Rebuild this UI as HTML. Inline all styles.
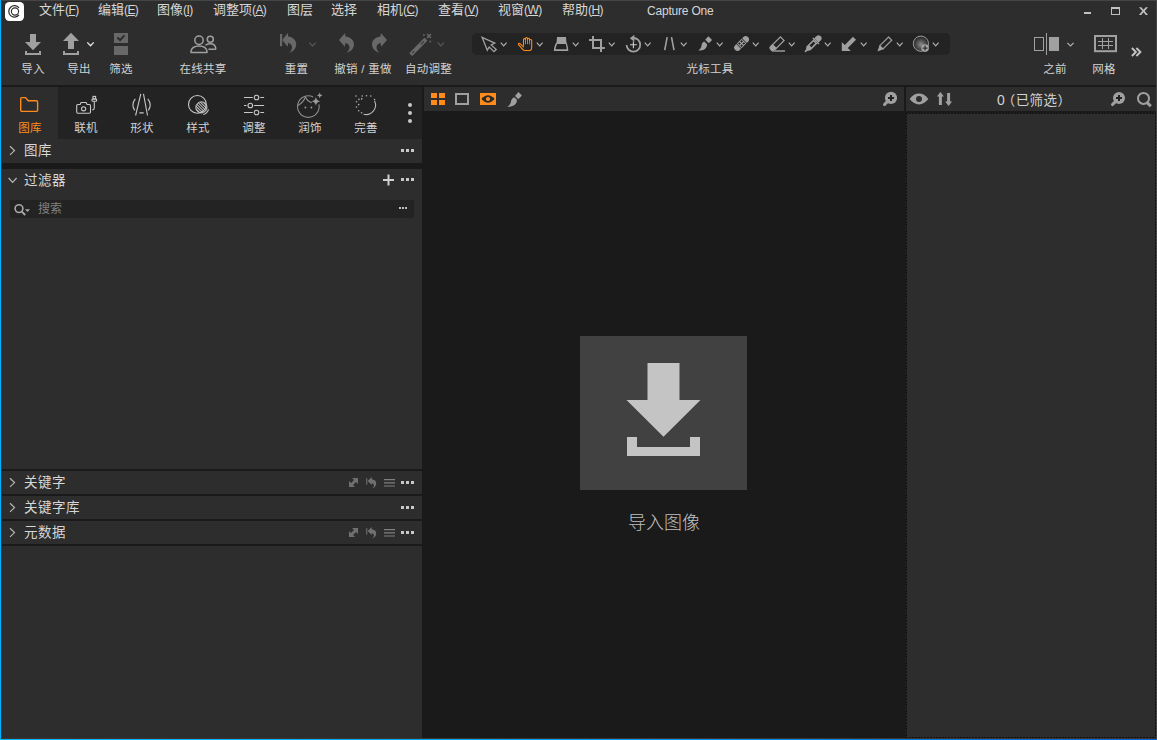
<!DOCTYPE html>
<html lang="zh-CN">
<head>
<meta charset="utf-8">
<title>Capture One</title>
<style>
*{box-sizing:border-box;margin:0;padding:0}
html,body{width:1157px;height:740px;overflow:hidden;background:#2d2d2d}
body{position:relative;font-family:"Liberation Sans","Noto Sans CJK SC",sans-serif;font-size:12px;color:#d2d2d2;-webkit-font-smoothing:antialiased}
.abs,.abs>*{position:absolute}
.t{position:absolute;white-space:nowrap;line-height:16px;height:16px}
.c{transform:translateX(-50%)}
.box{position:absolute}
svg{position:absolute;overflow:visible}
.m{position:absolute;top:1px;font-size:13px;line-height:18px;white-space:nowrap;color:#d6d6d6}
.m i{font-style:normal;font-size:12px;letter-spacing:-0.6px}
.m u{text-decoration:underline;text-underline-offset:1px}
.lbl{position:absolute;top:61px;font-size:11.500px;letter-spacing:.300px;line-height:16px;white-space:nowrap;color:#d2d2d2;transform:translateX(-50%)}
.tab{position:absolute;top:120px;font-size:11.500px;letter-spacing:.300px;line-height:16px;white-space:nowrap;color:#d2d2d2;transform:translateX(-50%)}
.ph{position:absolute;left:24px;font-size:13.500px;letter-spacing:.500px;line-height:20px;white-space:nowrap;color:#d6d6d6}
</style>
</head>
<body>
<!-- ===== window frame ===== -->
<div class="box" id="frame-top" style="left:0;top:0;width:1157px;height:1px;background:#454545"></div>

<!-- ===== menu bar ===== -->
<div id="menubar">
<svg id="logo" style="left:5px;top:2px" width="19" height="19" viewBox="0 0 19 19"><rect x="0" y="0" width="19" height="19" rx="4.200" fill="#fff"/><path d="M14 5.900A5.700 5.700 0 1 0 14 12.900" fill="none" stroke="#2a2a2a" stroke-width="1.200"/><circle cx="10" cy="9.500" r="3.600" fill="none" stroke="#2a2a2a" stroke-width="1.100"/></svg>
<div class="m" style="left:39px">文件<i>(<u>F</u>)</i></div>
<div class="m" style="left:98px">编辑<i>(<u>E</u>)</i></div>
<div class="m" style="left:157px">图像<i>(<u>I</u>)</i></div>
<div class="m" style="left:213px">调整项<i>(<u>A</u>)</i></div>
<div class="m" style="left:287px">图层</div>
<div class="m" style="left:331px">选择</div>
<div class="m" style="left:377px">相机<i>(<u>C</u>)</i></div>
<div class="m" style="left:438px">查看<i>(<u>V</u>)</i></div>
<div class="m" style="left:498px">视窗<i>(<u>W</u>)</i></div>
<div class="m" style="left:562px">帮助<i>(<u>H</u>)</i></div>
<div class="m" style="left:647px;top:2px;font-size:12px;letter-spacing:-0.2px">Capture One</div>
</div>

<!-- ===== toolbar ===== -->
<div id="toolbar">
<div class="lbl" style="left:33px">导入</div>
<div class="lbl" style="left:79px">导出</div>
<div class="lbl" style="left:121px">筛选</div>
<div class="lbl" style="left:203px">在线共享</div>
<div class="lbl" style="left:296.500px">重置</div>
<div class="lbl" style="left:363px">撤销 / 重做</div>
<div class="lbl" style="left:428.500px">自动调整</div>
<div class="box" id="cursorgroup" style="left:472px;top:33px;width:478px;height:22px;border-radius:5px;background:#232323"></div>
<div class="lbl" style="left:710px">光标工具</div>
<div class="lbl" style="left:1055px">之前</div>
<div class="lbl" style="left:1104px">网格</div>
</div>

<!-- ===== separators / main areas ===== -->
<div class="box" style="left:2px;top:85px;width:1155px;height:2px;background:#1a1a1a"></div>


<!-- tool tab strip -->
<div class="box" id="tabstrip" style="left:2px;top:87px;width:420px;height:52px;background:#232323"></div>
<div class="box" id="tabsel" style="left:2px;top:87px;width:56px;height:52px;background:#2d2d2d"></div>
<div class="tab" style="left:30px;color:#ff8c1a">图库</div>
<div class="tab" style="left:86px">联机</div>
<div class="tab" style="left:142px">形状</div>
<div class="tab" style="left:198px">样式</div>
<div class="tab" style="left:254px">调整</div>
<div class="tab" style="left:310px">润饰</div>
<div class="tab" style="left:366px">完善</div>

<!-- left panel -->
<div class="box" style="left:2px;top:163px;width:420px;height:6px;background:#1a1a1a"></div>
<div class="box" style="left:2px;top:469px;width:420px;height:2px;background:#1a1a1a"></div>
<div class="box" style="left:2px;top:494px;width:420px;height:2px;background:#1a1a1a"></div>
<div class="box" style="left:2px;top:519px;width:420px;height:2px;background:#1a1a1a"></div>
<div class="box" style="left:2px;top:544px;width:420px;height:2px;background:#1a1a1a"></div>
<div class="ph" style="top:141px">图库</div>
<div class="ph" style="top:171px">过滤器</div>
<div class="ph" style="top:473px">关键字</div>
<div class="ph" style="top:498px">关键字库</div>
<div class="ph" style="top:523px">元数据</div>
<div class="box" id="search" style="left:10px;top:200px;width:404px;height:18px;background:#232323"></div>
<div class="t" style="left:38px;top:201px;color:#808080">搜索</div>

<!-- splitter + viewer -->
<div class="box" style="left:422px;top:87px;width:2px;height:652px;background:#1a1a1a"></div>
<div class="box" id="viewer" style="left:424px;top:111px;width:482px;height:628px;background:#1a1a1a"></div>
<div class="box" id="importtile" style="left:580px;top:336px;width:167px;height:154px;background:#414141"></div>
<div class="t c" style="left:664px;top:511px;font-size:18px;line-height:24px;height:24px;color:#c0c0c0;font-weight:300">导入图像</div>

<!-- browser -->
<div class="box" style="left:904px;top:87px;width:2px;height:24px;background:#1a1a1a"></div>
<div class="t" style="left:997px;top:91px;font-size:14px;line-height:18px;color:#d2d2d2">0<span style="margin-left:-3px;font-size:13.500px;letter-spacing:.400px">（已筛选）</span></div>
<div class="box" style="left:906px;top:111px;width:250px;height:2px;background:#1a1a1a"></div>
<div class="box" id="browser" style="left:906px;top:113px;width:250px;height:625px;background:#2d2d2d"></div>
<div class="box" style="left:906px;top:113px;width:250px;height:1px;background:repeating-linear-gradient(90deg,#121212 0,#121212 2px,transparent 2px,transparent 3px)"></div>
<div class="box" style="left:906px;top:737px;width:250px;height:1px;background:repeating-linear-gradient(90deg,#121212 0,#121212 2px,transparent 2px,transparent 3px)"></div>
<div class="box" style="left:906px;top:113px;width:1px;height:625px;background:repeating-linear-gradient(180deg,#121212 0,#121212 2px,transparent 2px,transparent 3px)"></div>
<div class="box" style="left:1155px;top:113px;width:1px;height:625px;background:repeating-linear-gradient(180deg,#121212 0,#121212 2px,transparent 2px,transparent 3px)"></div>

<!-- ===== icons overlay (page coordinates) ===== -->
<svg id="icons" style="left:0;top:0" width="1157" height="740" viewBox="0 0 1157 740" fill="none">
<!-- window controls -->
<g fill="#c0c0c0">
<rect x="1084" y="12" width="7" height="2"/>
<path d="M1111 7h9v8h-9zM1112 9v5h7v-5z" fill-rule="evenodd"/>
<path d="M1139 7.2h2.3l2.2 2.6 2.2-2.6h2.3l-3.3 3.8 3.4 4h-2.3l-2.3-2.8-2.3 2.8h-2.3l3.4-4z"/>
</g>
<!-- import -->
<g fill="#a0a0a0">
<path d="M30 34h6v8h5l-8 8.2-8-8.2h5z"/>
<path d="M25 51h2v2h12v-2h2v4h-16z"/>
<!-- export -->
<path d="M71 32.8l8 8.2h-5v8h-6v-8h-5z"/>
<path d="M63 51h2v2h12v-2h2v4h-16z"/>
</g>
<path d="M87.3 42.4l3.2 3.4 3.2-3.4" stroke="#e8e8e8" stroke-width="1.3"/>
<!-- cull -->
<g fill="#686868">
<rect x="114" y="33" width="14" height="10"/>
<rect x="114" y="46" width="14" height="9"/>
</g>
<path d="M117.300 37.600l2.800 2.400 4.400-4.600" stroke="#2d2d2d" stroke-width="2"/>
<!-- share -->
<g stroke="#a0a0a0" stroke-width="1.500" stroke-linejoin="round" stroke-linecap="round">
<circle cx="199" cy="40.200" r="4.200"/>
<path d="M191.600 52.500c-.600 0-.800-.400-.700-1 .600-3.700 3.900-5.600 8.100-5.600s7.500 1.900 8.100 5.600c.100.600-.100 1-.700 1z"/>
<circle cx="210.300" cy="39.200" r="3"/>
<path d="M206 44.900c1.200-.700 2.700-1.100 4.300-1.100 3 0 5.100 1.600 5.500 4.600.100.600-.200.900-.700.900h-6.200"/>
</g>
<!-- reset -->
<g fill="#686868">
<rect x="280" y="34" width="2.200" height="12.200"/>
<path d="M282.200 39.900L287.900 32.900L288.200 36.400C292.500 36.800 296.200 39.800 296.200 44.200C296.200 48.400 293.200 51.500 289.200 52.900C291.200 51 292 49.300 292 47.600C292 45.200 290.400 43.400 288.200 43.100L287.600 46.800Z"/>
<!-- undo -->
<path transform="translate(339 0) scale(1.070 1) translate(-282.200 0)" d="M282.200 39.900L287.900 32.900L288.200 36.400C292.500 36.800 296.200 39.800 296.200 44.200C296.200 48.400 293.200 51.500 289.200 52.900C291.200 51 292 49.300 292 47.600C292 45.200 290.400 43.400 288.200 43.100L287.600 46.800Z"/>
<!-- redo -->
<path transform="translate(387 0) scale(-1.070 1) translate(-282.200 0)" d="M282.200 39.900L287.900 32.900L288.200 36.400C292.500 36.800 296.200 39.800 296.200 44.200C296.200 48.400 293.200 51.500 289.200 52.900C291.200 51 292 49.300 292 47.600C292 45.200 290.400 43.400 288.200 43.100L287.600 46.800Z"/>
</g>
<path d="M309.300 42.600l3.200 3.300 3.200-3.300" stroke="#585858" stroke-width="1.200"/>
<!-- auto adjust wand -->
<g transform="translate(418.350 46.900) rotate(-45)">
<rect x="-10.900" y="-2.100" width="21.800" height="4.200" rx=".900" fill="#686868"/>
<rect x="3.700" y="-.500" width="4.300" height="1" fill="#2d2d2d"/>
<rect x="-8.600" y="-.500" width="2.400" height="1" fill="#2d2d2d"/>
</g>
<path d="M427.100 34.100l3.800 3.800M430.900 34.100l-3.800 3.800" stroke="#686868" stroke-width="1.400"/>
<rect x="423.100" y="34.200" width="1.600" height="1.600" fill="#686868"/>
<rect x="429.400" y="40.700" width="1.700" height="1.700" fill="#606060"/>
<path d="M437.600 42.400l3.200 3.400 3.200-3.400" stroke="#585858" stroke-width="1.200"/>

<!-- ===== cursor tools ===== -->
<g stroke="#b0b0b0" stroke-width="1.200"><path d="M500.8 42.7l2.9 3.1 2.900-3.100"/><path d="M536.8 42.7l2.9 3.1 2.900-3.100"/><path d="M572.8 42.7l2.9 3.1 2.900-3.100"/><path d="M608.8 42.7l2.9 3.1 2.900-3.100"/><path d="M644.8 42.7l2.9 3.1 2.900-3.100"/><path d="M680.8 42.7l2.9 3.1 2.900-3.100"/><path d="M716.8 42.7l2.9 3.1 2.900-3.100"/><path d="M752.8 42.7l2.9 3.1 2.900-3.100"/><path d="M788.8 42.7l2.9 3.1 2.900-3.100"/><path d="M824.8 42.7l2.9 3.1 2.900-3.100"/><path d="M860.8 42.7l2.9 3.1 2.900-3.100"/><path d="M896.8 42.7l2.9 3.1 2.900-3.100"/><path d="M932.8 42.7l2.9 3.1 2.900-3.100"/></g>
<!-- pointer -->
<path d="M482.100 37.300L494.800 43.100l-3.600 1.900 5 4.600-2.200 2-4.800-4.600-1.900 3.200z" stroke="#a0a0a0" stroke-width="1.300" stroke-linejoin="miter"/>
<!-- hand -->
<g stroke="#ff8c1a" stroke-linecap="round" stroke-linejoin="round">
<path d="M525.500 43.800V39M527.500 43.800V38.300M529.500 44V39" stroke-width=".800"/>
<path d="M523.500 45.200V39.600a1 1 0 0 1 2 0M525.500 38.600a1 1 0 0 1 2 0M527.500 39.200a1 1 0 0 1 2 0M529.500 40.600a1.100 1.100 0 0 1 2.200 0V47.400c0 2-1.200 3.100-3 3.100H525c-1.300 0-2.200-.700-3-1.900L518.500 44.700c-.600-.900.600-1.900 1.500-1.100L523.500 46.800" stroke-width="1.100"/>
</g>
<!-- keystone -->
<path d="M557 37H566L566.400 42.300C567.600 45 568.200 48 568.300 51H553.900C554 48 554.600 45 556.600 42.300Z" fill="#a0a0a0"/>
<path d="M557.200 43.900H565.800C566.300 45.600 566.600 47.500 566.700 49.200H555.500C555.700 47.500 556.200 45.600 557.200 43.900Z" fill="#232323"/>
<!-- crop -->
<path d="M593 36V48H604.800M589 40H601V52" stroke="#a0a0a0" stroke-width="2"/>
<!-- rotate -->
<path d="M633.400 38a6.800 6.800 0 1 1-6.800 7" stroke="#a0a0a0" stroke-width="1.800"/>
<path d="M629.800 38.300l4.600-3.500v7z" fill="#a0a0a0"/>
<path d="M630 44.800h6.800M633.400 41.400v6.800" stroke="#d0d0d0" stroke-width="1.100"/>
<!-- lines -->
<path d="M667.200 37.100l-2.500 13M671.500 37.100l2.500 13" stroke="#a0a0a0" stroke-width="1.600"/>
<!-- brush -->
<g fill="#a0a0a0">
<path d="M708.400 36.200l3.700 3.700-3.300 3.300-3.600-3.400z"/>
<path d="M704.300 41.600l2.800 2.700c0 4.300-3.600 6.800-8.800 5.900 2.500-1.200 3-3.200 3.200-4.700.200-1.900 1.300-3.400 2.800-3.900z"/>
</g>
<!-- bandage -->
<g transform="translate(741.600 43.500) rotate(-45)">
<path d="M-9.100 0a3.300 3.300 0 0 1 3.300-3.300h1.700v6.600h-1.700a3.300 3.300 0 0 1-3.300-3.300zM9.100 0a3.300 3.300 0 0 0-3.300-3.300h-1.700v6.600h1.700a3.300 3.300 0 0 0 3.300-3.300z" fill="#a0a0a0"/>
<rect x="-3.400" y="-3.300" width="6.800" height="6.600" fill="#a0a0a0"/>
<path d="M-2.500 -2.500h1.900v1.900h-1.900zM.6 -2.500h1.900v1.900h-1.900zM-2.500 .6h1.900v1.900h-1.900zM.6 .6h1.900v1.900h-1.900z" fill="#232323"/>
</g>
<!-- eraser -->
<g transform="translate(776.800 44.100) rotate(-45)">
<rect x="-3.400" y="-2.600" width="11.100" height="5.200" stroke="#a0a0a0" stroke-width="1.200"/>
<path d="M-3.400 -3.200v6.400h-3a2.200 2.200 0 0 1-2.200-2.200v-2a2.200 2.200 0 0 1 2.200-2.200z" fill="#a0a0a0"/>
</g>
<rect x="774" y="50" width="11" height="2" fill="#7c7c7c"/>
<!-- eyedropper -->
<g transform="translate(812.850 44) rotate(-45)" fill="#a0a0a0">
<path d="M5 -3h3a3 3 0 0 1 0 6h-3z"/>
<rect x="3.600" y="-4.300" width="1.400" height="8.600"/>
<path d="M3.600 -2.800h-9.600l-3 1.900v1.800l3 1.900h9.600z"/>
<rect x="-11" y="-.900" width="2.200" height="1.800"/>
<rect x="-3.400" y="-1.300" width="5.600" height="2.600" fill="#232323"/>
</g>
<!-- arrow -->
<path d="M841.800 51V42l3 3 8.200-8.200 3 3-8.200 8.200 3 3z" fill="#a0a0a0"/>
<!-- pen -->
<path d="M888.500 37l3.200 3.200-8.700 8.700-3.200-3.200z" stroke="#a0a0a0" stroke-width="1.200"/>
<path d="M879.500 45.400l3.800 3.800-5.900 2.200z" fill="#a0a0a0"/>
<!-- gradient circle -->
<defs><radialGradient id="rg" cx="0.500" cy="0.550" r="0.500"><stop offset="0" stop-color="#8c8c8c"/><stop offset="0.450" stop-color="#5c5c5c"/><stop offset="1" stop-color="#262626"/></radialGradient></defs>
<circle cx="920.900" cy="43.700" r="7.600" fill="url(#rg)" stroke="#a0a0a0" stroke-width="1"/>
<circle cx="925.100" cy="48.100" r="3.800" fill="#a8a8a8"/>
<path d="M922.600 48.100h5M925.100 45.600v5" stroke="#333" stroke-width="1.300"/>
<!-- ===== before / grid / more ===== -->
<rect x="1034.500" y="37.500" width="9" height="13" stroke="#a0a0a0" stroke-width="1"/>
<rect x="1046" y="33" width="1" height="22" fill="#a0a0a0"/>
<rect x="1049" y="37" width="10" height="14" fill="#a0a0a0"/>
<path d="M1067.400 42.800l3.100 3.200 3.100-3.200" stroke="#b0b0b0" stroke-width="1.200"/>
<rect x="1095" y="36" width="21" height="15.200" stroke="#a0a0a0" stroke-width="2"/>
<path d="M1098 41.500h15M1098 45.500h15M1102.500 38v11M1108.500 38v11" stroke="#a0a0a0" stroke-width="1"/>
<path d="M1131.900 48l4 4-4 4M1136.400 48l4 4-4 4" stroke="#c4c4c4" stroke-width="1.900"/>

<!-- ===== tool tab icons ===== -->
<path d="M20.700 98.800a1.200 1.200 0 0 1 1.200-1.200h3.600l2.700 3.200h8.200a1.200 1.200 0 0 1 1.200 1.200v8.200a1.200 1.200 0 0 1-1.200 1.200h-14.500a1.200 1.200 0 0 1-1.200-1.200z" stroke="#ff8c1a" stroke-width="1.400"/>
<g stroke="#c8c8c8" stroke-width="1.100">
<!-- camera -->
<path d="M77.800 104.500h2.300l1-2h5l1 2h2.300a1.100 1.100 0 0 1 1.100 1.100v6.500a1.100 1.100 0 0 1-1.100 1.100h-11.600a1.100 1.100 0 0 1-1.100-1.100v-6.500a1.100 1.100 0 0 1 1.100-1.100z"/>
<circle cx="83.600" cy="108.800" r="2.100"/>
<rect x="93" y="96.400" width="2.600" height="2.600"/>
<rect x="92" y="99" width="4.600" height="2.300" rx=".600"/>
<path d="M94.300 101.300v6.400q0 2-2 2.200"/>
<!-- shape -->
<path d="M140.800 93.800l-5.200 21.700M143.500 93.800l4 21.700M139.400 112.900h4.300"/>
<path d="M135.300 98.900q-4.400 5.700-.600 11.500M147.800 98.900q4.400 5.700.600 11.500"/>
<!-- style -->
<circle cx="197.400" cy="104.400" r="8.900"/>
<path d="M208.500 109.300a7.400 7.400 0 0 1-5.200 5.200"/>
<!-- adjust -->
<path d="M244 97.500h8.700M260.300 97.500h3.800M244 105.500h2.500M254.100 105.500h10M244 112.500h8.700M260.300 112.500h3.800"/>
<circle cx="256.500" cy="97.500" r="2.300"/><circle cx="250.300" cy="105.500" r="2.300"/><circle cx="256.500" cy="112.500" r="2.300"/>
</g>
<defs><pattern id="hatch" width="2" height="2" patternUnits="userSpaceOnUse" patternTransform="rotate(45)"><rect width="2" height="1" fill="#c8c8c8"/></pattern></defs>
<circle cx="201.400" cy="107.400" r="5.600" fill="url(#hatch)" stroke="#c8c8c8" stroke-width="1"/>
<!-- retouch face -->
<g stroke="#8c8c8c" stroke-width="1.100">
<path d="M313.200 96.900a10.800 10.800 0 1 0 5.700 7.400"/>
<path d="M298 105.500q5.500-3 7.600-9M305.500 96.700q1.500 4.400 6.300 6"/>
</g>
<g fill="#9a9a9a">
<circle cx="305.400" cy="107.500" r=".900"/><circle cx="311.400" cy="107.500" r=".900"/>
<path d="M315.900 96.800q.5 4 4.500 4.500-4 .5-4.500 4.500-.5-4-4.500-4.500 4-.5 4.500-4.500z"/>
<path d="M319.700 92.600q.3 2.500 2.800 2.800-2.500.3-2.800 2.800-.3-2.500-2.800-2.800 2.500-.3 2.800-2.800z"/>
</g>
<!-- refine -->
<path d="M374.600 101a9.500 9.500 0 0 1-11.100 13.200" stroke="#b8b8b8" stroke-width="1.100"/>
<g fill="#b0b0b0"><circle cx="356" cy="96" r=".800"/><circle cx="362.2" cy="96" r=".800"/><circle cx="366.5" cy="95.7" r=".800"/><circle cx="370.8" cy="96" r=".800"/><circle cx="374.6" cy="99.6" r=".800"/><circle cx="356.5" cy="101.7" r=".800"/><circle cx="356.5" cy="107" r=".800"/><circle cx="358.7" cy="110.8" r=".800"/><circle cx="361.6" cy="112.7" r=".800"/><circle cx="358.9" cy="99.4" r=".800"/><circle cx="361.7" cy="98.9" r=".800"/><circle cx="358.7" cy="104.6" r=".800"/></g>
<g fill="#c8c8c8"><circle cx="410" cy="105" r="2"/><circle cx="410" cy="113" r="2"/><circle cx="410" cy="121" r="2"/></g>
<!-- ===== panel header icons ===== -->
<g stroke="#b4b4b4" stroke-width="1.200">
<path d="M10 146.29999999999998l4.500 4.300-4.500 4.300"/><path d="M10 478.3l4.500 4.300-4.500 4.300"/><path d="M10 503.3l4.500 4.300-4.500 4.300"/><path d="M10 528.3000000000001l4.500 4.300-4.500 4.300"/>
<path d="M8.600 178l4 4.300 4-4.300"/>
</g>
<rect x="401" y="149" width="3" height="3" fill="#c8c8c8"/><rect x="406" y="149" width="3" height="3" fill="#c8c8c8"/><rect x="411" y="149" width="3" height="3" fill="#c8c8c8"/><rect x="401" y="178" width="3" height="3" fill="#c8c8c8"/><rect x="406" y="178" width="3" height="3" fill="#c8c8c8"/><rect x="411" y="178" width="3" height="3" fill="#c8c8c8"/><rect x="401" y="481" width="3" height="3" fill="#c8c8c8"/><rect x="406" y="481" width="3" height="3" fill="#c8c8c8"/><rect x="411" y="481" width="3" height="3" fill="#c8c8c8"/><rect x="401" y="506" width="3" height="3" fill="#c8c8c8"/><rect x="406" y="506" width="3" height="3" fill="#c8c8c8"/><rect x="411" y="506" width="3" height="3" fill="#c8c8c8"/><rect x="401" y="531" width="3" height="3" fill="#c8c8c8"/><rect x="406" y="531" width="3" height="3" fill="#c8c8c8"/><rect x="411" y="531" width="3" height="3" fill="#c8c8c8"/>
<path d="M383 180h11M388.500 174.500v11" stroke="#d0d0d0" stroke-width="2"/>

<g fill="#707070">
<path d="M352 478.0h6v6l-2-2-3 3 2 2h-6v-6l2 2 3-3z"/>
<rect x="366.200" y="478.2" width="1.100" height="6.400"/>
<path d="M367.600 480.9l4.200-3.900v2.300c2.700.200 4.400 1.900 4.400 4.200 0 2.300-1.600 4.200-4 5.100 1.100-1 1.700-2 1.700-3.100 0-1.200-.800-2.100-2.100-2.200v1.700z"/>
</g>
<path d="M384 479.6h11M384 482.8h11M384 486.0h11" stroke="#808080" stroke-width="1.200"/>
<g fill="#707070">
<path d="M352 528.0h6v6l-2-2-3 3 2 2h-6v-6l2 2 3-3z"/>
<rect x="366.200" y="528.2" width="1.100" height="6.400"/>
<path d="M367.600 530.9l4.200-3.900v2.300c2.700.200 4.400 1.900 4.400 4.200 0 2.300-1.600 4.200-4 5.100 1.100-1 1.700-2 1.700-3.100 0-1.200-.800-2.100-2.100-2.200v1.700z"/>
</g>
<path d="M384 529.6h11M384 532.8h11M384 536.0h11" stroke="#808080" stroke-width="1.200"/>
<!-- search -->
<circle cx="19" cy="208.600" r="3.900" stroke="#a8a8a8" stroke-width="1.600"/>
<path d="M21.800 211.600l3.400 3.400" stroke="#a8a8a8" stroke-width="2"/>
<path d="M25 209.200h5l-2.500 2.800z" fill="#a8a8a8"/>
<rect x="399" y="207" width="2" height="2" fill="#c0c0c0"/><rect x="402" y="207" width="2" height="2" fill="#c0c0c0"/><rect x="405" y="207" width="2" height="2" fill="#c0c0c0"/>
<!-- ===== viewer toolbar ===== -->
<g fill="#ff8c1a">
<rect x="431" y="93" width="6" height="5"/><rect x="439" y="93" width="6" height="5"/><rect x="431" y="100" width="6" height="5"/><rect x="439" y="100" width="6" height="5"/>
<rect x="480" y="93" width="16" height="12"/>
</g>
<rect x="456" y="94" width="12" height="10" stroke="#a0a0a0" stroke-width="2"/>
<path d="M481.400 99q3.200-3.700 6.600-3.700t6.600 3.700q-3.200 3.700-6.600 3.700t-6.600-3.700z" fill="#2a2a2a"/>
<circle cx="488" cy="99" r="2.100" fill="#ff8c1a"/>
<g fill="#a0a0a0">
<path d="M518.400 92l3.500 3.600-3.600 3.600-3.300-3.300z"/>
<path d="M514.200 97.200l2.700 2.600c.300 4.300-3.800 7.300-9.800 7 2.700-1.300 3.500-3.300 3.800-5 .300-2.100 1.500-3.900 3.300-4.600z"/>
<!-- zoom (viewer) -->
<circle cx="891" cy="97.900" r="6.100"/>
<path d="M886.800 100l2.200 2.200-3.400 3.400a1.550 1.550 0 0 1-2.200-2.200z"/>
<!-- browser -->
<path d="M909.600 99q4.300-5.400 9.400-5.400t9.400 5.400q-4.300 5.400-9.400 5.400t-9.400-5.400z"/>
<path d="M940.400 92l3.500 4.600h-2v8.400h-3v-8.400h-2zM948.600 106l3.500-4.600h-2v-8.400h-3v8.400h-2z"/>
<circle cx="1119" cy="98" r="6"/>
<path d="M1114.800 100l2.200 2.200-3.400 3.400a1.550 1.550 0 0 1-2.200-2.200z"/>
</g>
<path d="M888 97.900h6M891 94.900v6M1116 98h6M1119 95v6" stroke="#222" stroke-width="2"/>
<circle cx="919" cy="99" r="3" fill="#2d2d2d"/>
<circle cx="1143.500" cy="98.400" r="5.500" stroke="#a0a0a0" stroke-width="2"/>
<path d="M1147.200 102.600l3.600 3.600" stroke="#a0a0a0" stroke-width="3"/>
<!-- import tile arrow -->
<g fill="#c4c4c4">
<path d="M647.500 363h32v37h21l-37 36.800-37-36.800h21z"/>
<path d="M627 437h10v10h53v-10h10v19h-73z"/>
</g>
</svg>

<!-- frame edges -->
<div class="box" style="left:1px;top:0;width:1px;height:739px;background:#42352f"></div>
<div class="box" style="left:1px;top:738px;width:1155px;height:1px;background:#42352f"></div>
<div class="box" style="left:1156px;top:0;width:1px;height:740px;background:#454545"></div>
<div class="box" style="left:0;top:0;width:1px;height:740px;background:#00b0ff"></div>
<div class="box" style="left:0;top:739px;width:1157px;height:1px;background:linear-gradient(90deg,#00b8ff 0%,#00a8f5 40%,#0080e0 75%,#0066d4 100%)"></div>
</body>
</html>
